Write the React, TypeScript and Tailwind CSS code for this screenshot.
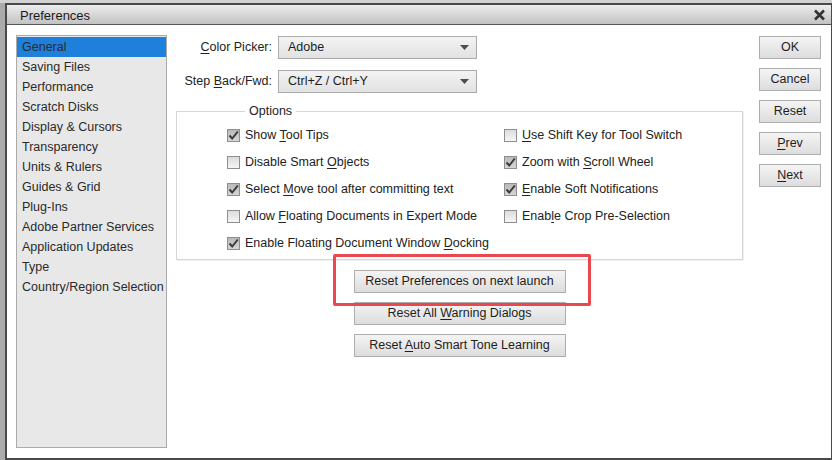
import React from "react";

const font = { fontFamily: '"Liberation Sans", Tahoma, sans-serif' };

const categories = [
  "General",
  "Saving Files",
  "Performance",
  "Scratch Disks",
  "Display & Cursors",
  "Transparency",
  "Units & Rulers",
  "Guides & Grid",
  "Plug-Ins",
  "Adobe Partner Services",
  "Application Updates",
  "Type",
  "Country/Region Selection",
];

// label split as [before, underlined letter, after]
const leftOptions: { parts: [string, string, string]; checked: boolean }[] = [
  { parts: ["Show ", "T", "ool Tips"], checked: true },
  { parts: ["Disable Smart ", "O", "bjects"], checked: false },
  { parts: ["Select ", "M", "ove tool after committing text"], checked: true },
  { parts: ["Allow ", "F", "loating Documents in Expert Mode"], checked: false },
  { parts: ["Enable Floating Document Window ", "D", "ocking"], checked: true },
];

const rightOptions: { parts: [string, string, string]; checked: boolean }[] = [
  { parts: ["", "U", "se Shift Key for Tool Switch"], checked: false },
  { parts: ["Zoom with ", "S", "croll Wheel"], checked: true },
  { parts: ["", "E", "nable Soft Notifications"], checked: true },
  { parts: ["Enab", "l", "e Crop Pre-Selection"], checked: false },
];

function Mnemonic({ parts }: { parts: [string, string, string] }) {
  return (
    <span className="whitespace-pre">
      {parts[0]}
      <span className="underline underline-offset-2">{parts[1]}</span>
      {parts[2]}
    </span>
  );
}

function Checkbox({ checked }: { checked: boolean }) {
  return (
    <div
      className={`w-[13px] h-[13px] border border-[#8e8e8e] flex items-center justify-center shrink-0 ${
        checked ? "bg-gradient-to-b from-[#b9b9b9] to-[#d6d6d6]" : "bg-gradient-to-b from-[#dcdcdc] to-[#f6f6f6]"
      }`}
    >
      {checked && (
        <svg width="11" height="11" viewBox="0 0 11 11">
          <path d="M1.5 5.5 L4.2 8.5 L9.8 1.5" fill="none" stroke="#3a3a3a" strokeWidth="2" />
        </svg>
      )}
    </div>
  );
}

function Option({ parts, checked }: { parts: [string, string, string]; checked: boolean }) {
  return (
    <div className="h-[27px] flex items-center gap-[5px] text-[12.5px] text-[#222]">
      <Checkbox checked={checked} />
      <Mnemonic parts={parts} />
    </div>
  );
}

function Button({ children, className = "" }: { children: React.ReactNode; className?: string }) {
  return (
    <div
      className={`h-[23px] border border-[#adadad] bg-gradient-to-b from-[#f4f4f4] to-[#dddddd] flex items-center justify-center text-[12.5px] text-[#1e1e1e] ${className}`}
    >
      {children}
    </div>
  );
}

function Select({ value }: { value: string }) {
  return (
    <div className="w-[199px] h-[23px] border border-[#acacac] bg-gradient-to-b from-[#f3f3f3] to-[#e2e2e2] flex items-center justify-between pl-[9px] pr-[7px] text-[12.5px] text-[#1e1e1e]">
      <span>{value}</span>
      <svg width="9" height="5" viewBox="0 0 9 5">
        <path d="M0 0 H9 L4.5 5 Z" fill="#4d4d4d" />
      </svg>
    </div>
  );
}

export default function App() {
  return (
    <div className="w-[832px] h-[460px] bg-[#ababab] flex flex-col overflow-hidden" style={font}>
      <div className="h-[3px] bg-[#d2d2d2] shrink-0"></div>
      <div className="flex flex-1">
        <div className="w-[5px] shrink-0"></div>
        <div className="flex-1 border-2 border-[#4a4a4a] border-r-[1px] bg-white flex flex-col">
          {/* Title bar */}
          <div className="h-[20px] shrink-0 bg-gradient-to-b from-[#ededed] to-[#c2c2c2] border-b border-[#555] flex items-center justify-between pl-[13px] pr-[5px] pt-[2px]">
            <span className="text-[13px] text-[#1a1a1a]">Preferences</span>
            <svg width="13" height="12" viewBox="0 0 13 12" className="-mt-[2px]">
              <path d="M2 1.5 L11 10.5 M11 1.5 L2 10.5" stroke="#333" strokeWidth="2.6" />
            </svg>
          </div>

          {/* Body */}
          <div className="flex-1 flex pl-[9px] pt-[10px] relative">
            {/* Category list */}
            <div className="w-[151px] h-[413px] bg-[#e8e8e8] border border-[#ababab] pt-[1px] text-[12.5px] text-[#2a2a2a] shrink-0">
              {categories.map((c, i) => (
                <div
                  key={c}
                  className={`h-[20px] flex items-center pl-[5px] ${i === 0 ? "bg-[#1f80dc]" : ""}`}
                >
                  {c}
                </div>
              ))}
            </div>

            {/* Main settings */}
            <div className="w-[567px] ml-[9px] flex flex-col shrink-0 pt-[1px]">
              <div className="flex items-center gap-[6px]">
                <div className="w-[96px] text-right text-[12.5px] text-[#222]">
                  <Mnemonic parts={["", "C", "olor Picker:"]} />
                </div>
                <Select value="Adobe" />
              </div>
              <div className="flex items-center gap-[6px] mt-[11px]">
                <div className="w-[96px] text-right text-[12.5px] text-[#222]">
                  <Mnemonic parts={["Step ", "B", "ack/Fwd:"]} />
                </div>
                <Select value="Ctrl+Z / Ctrl+Y" />
              </div>

              <fieldset className="mt-[10px] border border-[#d6d6d6] shadow-[1px_1px_0_#f0f0f0] h-[157px] pl-[50px] pt-[3px]">
                <legend className="ml-[18px] px-[4px] text-[12.5px] leading-[16px] text-[#222]">Options</legend>
                <div className="flex">
                  <div className="w-[277px] flex flex-col">
                    {leftOptions.map((o) => (
                      <Option key={o.parts.join("")} parts={o.parts} checked={o.checked} />
                    ))}
                  </div>
                  <div className="flex flex-col">
                    {rightOptions.map((o) => (
                      <Option key={o.parts.join("")} parts={o.parts} checked={o.checked} />
                    ))}
                  </div>
                </div>
              </fieldset>

              <div className="flex flex-col items-center gap-[9px] mt-[10px]">
                <Button className="w-[212px]">Reset Preferences on next launch</Button>
                <Button className="w-[212px]">
                  <Mnemonic parts={["Reset All ", "W", "arning Dialogs"]} />
                </Button>
                <Button className="w-[212px]">
                  <Mnemonic parts={["Reset ", "A", "uto Smart Tone Learning"]} />
                </Button>
              </div>
            </div>

            {/* Right buttons */}
            <div className="ml-[16px] flex flex-col gap-[9px] w-[62px] shrink-0 pt-[1px]">
              <Button>OK</Button>
              <Button>Cancel</Button>
              <Button>Reset</Button>
              <Button>
                <Mnemonic parts={["", "P", "rev"]} />
              </Button>
              <Button>
                <Mnemonic parts={["", "N", "ext"]} />
              </Button>
            </div>

            {/* Red annotation highlight */}
            <div className="absolute left-[326px] top-[229px] w-[258px] h-[52px] border-[3px] border-[#e9484e] rounded-[2px] pointer-events-none"></div>
          </div>
        </div>
      </div>
    </div>
  );
}
